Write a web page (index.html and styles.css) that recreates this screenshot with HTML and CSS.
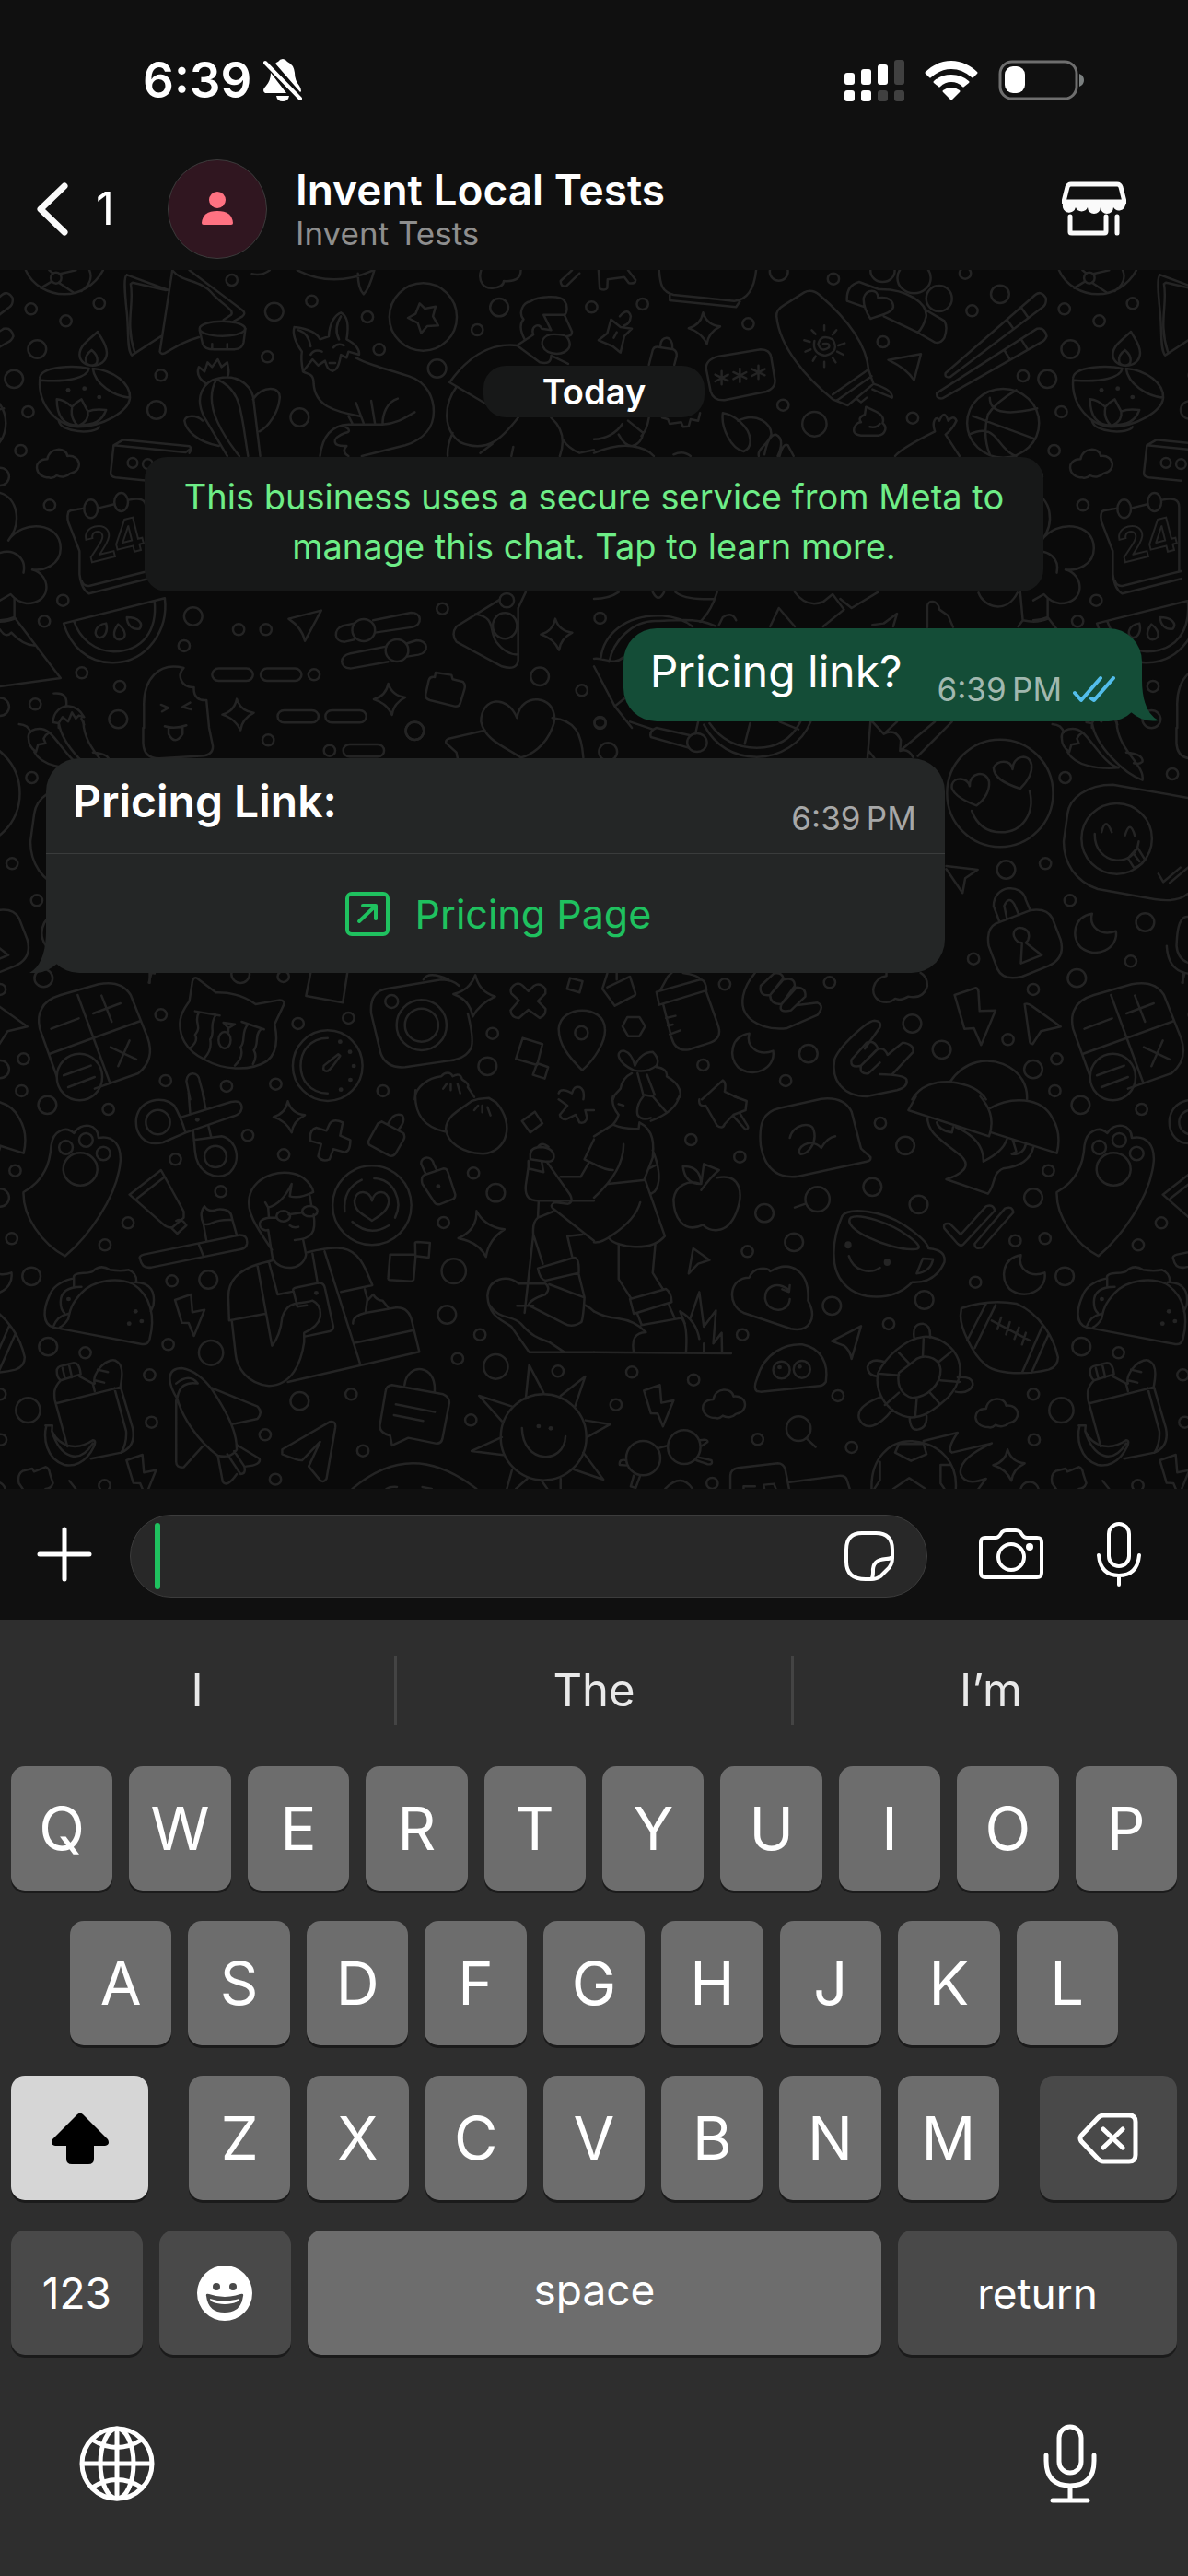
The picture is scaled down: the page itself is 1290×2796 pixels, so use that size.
FILE: index.html
```html
<!DOCTYPE html>
<html lang="en">
<head>
    <meta charset="utf-8">
    <meta name="viewport" content="width=device-width, initial-scale=1">
    <title>Invent Local Tests</title>
    <link rel="stylesheet" href="styles.css">
</head>
<body>
    <header class="top">
        <div class="status">
            <div class="statusLeft">
                <span class="clock">6:39</span>
                <svg class="bell" viewBox="0 0 42 46" aria-hidden="true">
                    <path fill="#fff" d="M13 5Q15 3 16 3Q18 0 21 0T26 3Q33 6 34 15Q34 23 39 29Q41 32 41 35L40 36ZM8 15L25 37H2Q0 36 0 34Q0 32 3 29Q8 23 8 15ZM14 40H28Q27 46 21 46T14 40Z"/>
                    <path stroke="#fff" stroke-width="4" stroke-linecap="round" d="M2 4L40 43"/>
                </svg>
            </div>
            <div class="statusRight">
                <svg class="signal" viewBox="0 0 65 45" aria-hidden="true">
                    <g fill="#fff">
                        <rect x="0" y="14" width="11" height="13" rx="3"/>
                        <rect x="18" y="10" width="11" height="17" rx="3"/>
                        <rect x="36" y="5" width="11" height="22" rx="3"/>
                        <rect x="0" y="33" width="11" height="12" rx="3"/>
                        <rect x="18" y="33" width="11" height="12" rx="3"/>
                    </g>
                    <g fill="#404040">
                        <rect x="54" y="0" width="11" height="27" rx="3"/>
                        <rect x="36" y="33" width="11" height="12" rx="3"/>
                        <rect x="54" y="33" width="11" height="12" rx="3"/>
                    </g>
                </svg>
                <svg class="wifi" viewBox="0 0 58 42" aria-hidden="true">
                    <path fill="#fff" d="M29 0C18 0 8 5 1 12Q0 13 1 14L5 18Q6 19 7 18Q17 9 29 9T51 18Q52 19 53 18L57 14Q58 13 57 12C50 5 40 0 29 0ZM29 15Q18 15 10 22Q9 23 10 24L15 28Q16 29 17 28Q22 23 29 23T41 28Q42 29 43 28L48 24Q49 23 48 22Q40 15 29 15ZM29 29Q24 29 20 32Q19 33 20 34L28 42Q29 43 30 42L38 34Q39 33 38 32Q34 29 29 29Z"/>
                </svg>
                <svg class="battery" viewBox="0 0 94 44" aria-hidden="true">
                    <rect x="2" y="2" width="83" height="40" rx="13" fill="none" stroke="#6e6e6e" stroke-width="3"/>
                    <rect x="7" y="7" width="22" height="29" rx="9" fill="#fff"/>
                    <path fill="#7b8080" d="M88 15Q93 17 93 22T88 29Z"/>
                </svg>
            </div>
        </div>
        <div class="nav">
            <button class="back" type="button" aria-label="Back, 1 unread">
                <svg width="34" height="58" viewBox="0 0 34 58" aria-hidden="true"><path fill="none" stroke="#fafafa" stroke-width="7" stroke-linecap="round" stroke-linejoin="round" d="M30 4L4 29L30 54"/></svg>
                <span>1</span>
            </button>
            <div class="avatar">
                <svg width="36" height="38" viewBox="0 0 36 38" aria-hidden="true"><circle cx="18" cy="9" r="9" fill="#ff7282"/><path fill="#ff7282" d="M1 34Q2 21 18 21T35 34Q35 36 33 36H3Q1 36 1 34Z"/></svg>
            </div>
            <div class="contact">
                <h1>Invent Local Tests</h1>
                <p>Invent Tests</p>
            </div>
            <button class="store" type="button" aria-label="Store">
                <svg width="70" height="60" viewBox="0 0 70 60" aria-hidden="true">
                    <g fill="none" stroke="#fafafa" stroke-width="5" stroke-linejoin="round" stroke-linecap="round">
                        <path d="M10 3H60Q63 3 64 6L68 22H2L6 6Q7 3 10 3Z"/>
                        <path d="M9 38V55Q9 56 11 56H46Q48 56 48 54V38M60 38V56"/>
                    </g>
                    <path fill="#fafafa" d="M1 21H69V25A7 7 0 0 1 56 28A7 7 0 0 1 42 28A7 7 0 0 1 28 28A7 7 0 0 1 15 28A7 7 0 0 1 1 25Z"/>
                </svg>
            </button>
        </div>
    </header>

    <main class="chat">
        <!-- doodle wallpaper, the tile repeats every 1122 units -->
        <svg class="wallpaper" viewBox="0 0 1290 1323" preserveAspectRatio="xMidYMin slice" aria-hidden="true">
            <defs>
                <ellipse id="s" rx="15" ry="18"/>
                <ellipse id="m" rx="24" ry="29"/>
                <ellipse id="l" rx="32" ry="40"/>
                <ellipse id="dot" class="solid" rx="6" ry="7"/>
                <path id="spark" d="M0-52Q10-12 45-7Q14 12 10 50Q-4 12-38-1Q-6-12 0-52Z"/>
                <path id="bolt" d="M0 18L42 0L46 58L78 50L50 135L36 93L18 92Z"/>
                <path id="moon" d="M0 0C-50 10-55 75-30 110C10 150 70 115 63 57C25 75-10 45 0 0Z"/>
                <path id="cloud" d="M-22 45C-62 45-67-15-27-15C-22-55 23-55 26-25C63-30 68 25 33 32C23 45 8 45-2 38Q-12 50-22 45Z"/>
                <path id="star" d="M0-22V22M-17-10L17 10M-17 12L17-10"/>
            </defs>
            <g id="tile">
                <g transform="translate(0 -3) scale(.4113 .3333)">
                    <path d="M68 10C85 60 130 88 170 88S250 60 272 10M134 35a14 18 0 1 0 28 0a14 18 0 1 0-28 0M140 20L130 10M158 22L200 10M137 46L108 68M155 50L193 82M236 10C245 35 235 60 215 78"/>
                    <path d="M335 25L445 75M335 25C325 30 330 90 335 150S335 270 348 287L425 225M345 55L350 50L438 75M345 55C355 120 330 180 355 275M455 10L422 275Q425 285 435 280C470 255 490 240 525 228M455 10C480 50 530 40 560 85C590 125 620 140 610 155L590 172M500 10L640 140Q650 150 640 160L615 178"/>
                    <ellipse cx="587" cy="200" rx="60" ry="24"/>
                    <path d="M527 205L535 250Q540 268 565 268H615Q640 268 643 245L648 200M560 250V265M600 250V265"/>
                    <path d="M258 210C225 245 210 260 210 285C210 330 280 335 282 280C282 250 268 235 258 210ZM242 270C220 290 222 320 242 320S262 290 242 270M105 360C110 320 200 320 235 330C230 360 180 375 108 368M245 330C300 335 345 380 343 425C300 420 250 380 245 330M105 365C100 450 150 515 205 520C270 520 340 470 343 425M150 430C150 480 165 515 205 515C250 515 270 500 280 465Q250 460 232 470L215 430Q200 440 190 455Q170 432 150 430M190 460C185 490 200 510 205 515M232 470C235 490 225 505 210 515M155 500C160 540 250 545 262 520"/>
                    <use href="#dot" x="180" y="400"/><use href="#dot" x="223" y="395"/><use href="#dot" x="262" y="423"/>
                    <use href="#cloud" x="152" y="640"/>
                    <path d="M300 580L325 562L500 583Q508 590 500 605M300 580L490 603L505 590M300 580L292 670Q292 683 305 685L390 695"/>
                    <ellipse cx="350" cy="637" rx="13" ry="16"/><ellipse cx="390" cy="641" rx="13" ry="16"/>
                    <path d="M545 380C520 360 520 340 525 325L540 340L548 310L560 325L575 300L585 325L600 310C605 340 605 345 600 358M600 615L540 490C510 420 540 370 575 362C640 345 670 400 670 440L687 615M632 615C570 520 540 430 572 365C640 400 635 470 655 615M668 430C690 385 745 385 738 430C735 470 710 520 685 535M578 582C520 570 490 530 487 500C490 480 520 480 535 500"/>
                    <path d="M777 195C820 200 840 220 845 235L868 225C870 180 885 155 900 148C920 160 920 200 915 235C940 250 950 270 948 285L920 275L915 295L900 285C895 320 890 335 878 338C865 335 862 320 858 305L840 320L825 300L800 340C795 310 795 290 797 275C780 245 772 215 777 195M788 205Q815 215 820 258M900 160Q880 200 895 235M820 285Q830 265 850 275M880 262Q890 245 908 255M870 312H885M800 340C815 350 828 345 828 380C832 450 880 470 950 485M940 295C960 310 1000 325 1080 355C1130 375 1145 430 1145 470C1145 520 1120 560 1070 580L955 615M845 615C850 560 870 515 920 512H1010C1050 508 1070 490 1095 472M1010 512C1010 480 1020 440 1050 428M980 435L990 510M940 442L960 508M920 485L930 508M905 515Q935 535 910 540C870 560 880 585 915 582Q900 600 920 615"/>
                    <ellipse cx="1117" cy="162" rx="89" ry="110"/>
                    <path d="M1108 118L1122 135L1150 128L1143 160L1157 190L1128 192L1112 215L1103 182L1077 165L1097 152Z"/>
                    <path d="M1385 235C1370 200 1375 180 1382 170C1368 150 1380 115 1400 112C1420 95 1480 90 1490 110C1500 125 1497 150 1490 155L1510 210Q1510 225 1495 225C1515 255 1500 280 1470 282C1430 280 1420 240 1445 222C1460 215 1480 220 1490 222M1490 155H1435L1455 205L1430 200C1425 180 1400 190 1408 220L1365 255L1425 310Q1455 320 1455 288L1500 315M1365 255C1290 245 1230 300 1187 375L1290 450M1205 390C1170 450 1170 530 1215 570C1290 610 1330 550 1368 490M1195 540Q1180 580 1182 615M1455 490Q1500 540 1478 615M1268 605L1300 575M1355 585L1350 615M1485 560Q1500 590 1530 605L1568 595"/>
                    <path d="M785 10Q880 70 985 10M945 20Q945 70 960 88Q975 70 988 10M665 22Q690 30 712 10M1270 10C1260 50 1280 70 1300 68Q1330 65 1330 45Q1375 50 1375 10M1510 10L1480 45Q1480 65 1495 62L1530 20"/>
                    <path d="M0 735C45 750 60 830 22 890C60 820 160 830 160 915C160 970 115 990 85 985C135 1000 140 1095 70 1095Q45 1090 28 1065L0 1085M0 930C40 915 70 950 62 995M38 1080V1140L160 1338L0 1365M38 1140Q20 1150 0 1150M0 1180Q15 1210 30 1190Q60 1230 90 1232"/>
                    <path d="M180 800C180 790 200 790 222 785M258 785L302 772M340 758Q385 745 385 780V990M180 800Q175 820 185 845L210 925V1000Q215 1050 235 1063L390 1015M215 1020Q220 1040 235 1038L390 990"/>
                    <ellipse cx="240" cy="787" rx="18" ry="30"/><ellipse cx="320" cy="765" rx="18" ry="30"/>
                    <path d="M168 1160L435 1078C445 1180 390 1285 300 1288C230 1290 185 1230 168 1160ZM195 1152C210 1210 250 1250 300 1252C380 1250 415 1180 408 1088M280 1160C250 1165 245 1200 262 1207C280 1205 285 1180 280 1160ZM312 1163C295 1190 300 1210 315 1213C335 1210 335 1185 312 1163ZM335 1140C335 1165 350 1182 368 1178C380 1160 365 1140 335 1140Z"/>
                    <path d="M762 1145L848 1118L805 1217Q798 1175 762 1145Z"/>
                    <path d="M935 1160L905 1168C880 1178 880 1220 910 1220L935 1213M985 1150L1085 1125C1115 1125 1115 1165 1090 1172L990 1190M1020 1235L925 1258C895 1265 895 1305 925 1307L1025 1285M1075 1225L1100 1215C1130 1215 1135 1255 1105 1262L1075 1268"/>
                    <ellipse cx="960" cy="1182" rx="30" ry="36"/><ellipse cx="1048" cy="1248" rx="30" ry="36"/>
                    <path d="M1320 1082L1205 1170Q1190 1195 1205 1220L1325 1300Q1365 1315 1368 1280V1110L1388 1058M1255 1130C1310 1140 1290 1180 1310 1220Q1335 1262 1368 1262"/>
                    <ellipse cx="1338" cy="1085" rx="19" ry="23"/><ellipse cx="1333" cy="1168" rx="32" ry="42"/>
                    <use href="#spark" x="1466" y="1197"/><use href="#spark" x="625" y="1458"/><use href="#spark" x="1025" y="1408"/>
                    <rect x="560" y="1307" width="108" height="40" rx="17" ry="20"/><rect x="688" y="1307" width="108" height="40" rx="17" ry="20"/><rect x="733" y="1443" width="108" height="40" rx="17" ry="20"/><rect x="859" y="1443" width="108" height="40" rx="17" ry="20"/>
                    <use href="#s" x="829" y="1327"/>
                    <path d="M1150 1320L1192 1328L1195 1342L1222 1350Q1230 1360 1226 1375L1215 1420Q1212 1432 1200 1430L1135 1410Q1122 1405 1124 1390L1132 1345Q1135 1332 1148 1335Z"/>
                    <path d="M1365 1468C1370 1420 1400 1405 1420 1408C1465 1415 1470 1470 1458 1500C1440 1560 1400 1590 1375 1597C1330 1560 1280 1540 1270 1480C1270 1400 1340 1390 1365 1468ZM1458 1468C1520 1475 1535 1520 1540 1597"/>
                    <path d="M380 1500V1430C378 1340 420 1285 485 1305C465 1330 480 1370 512 1368C510 1400 525 1412 545 1410L552 1500L562 1560Q562 1590 530 1592L420 1600Q380 1600 378 1550V1500M425 1425L445 1435L428 1447M502 1418L482 1432L505 1440M435 1495Q462 1505 492 1492M445 1500V1520Q462 1560 482 1520V1500"/>
                    <path d="M142 1388C170 1385 178 1400 175 1430M140 1482C140 1450 160 1428 182 1430C205 1432 215 1450 222 1465L208 1460L200 1470L190 1450L180 1480L165 1465L155 1485ZM155 1485V1500M215 1470L222 1490"/>
                    <use href="#s" x="82" y="136"/><use href="#s" x="174" y="175"/><use href="#s" x="262" y="118"/><use href="#s" x="612" y="42"/><use href="#s" x="823" y="110"/><use href="#s" x="706" y="292"/><use href="#s" x="970" y="162"/><use href="#s" x="1001" y="268"/><use href="#s" x="425" y="352"/><use href="#s" x="74" y="471"/><use href="#s" x="55" y="597"/><use href="#s" x="131" y="775"/>
                    <use href="#s" x="166" y="1085"/><use href="#s" x="117" y="1153"/><use href="#s" x="630" y="1180"/><use href="#s" x="702" y="1180"/><use href="#s" x="486" y="1233"/><use href="#s" x="216" y="1321"/><use href="#s" x="316" y="1365"/><use href="#s" x="93" y="1423"/><use href="#s" x="1168" y="1112"/><use href="#s" x="1536" y="1378"/><use href="#s" x="1260" y="204"/><use href="#s" x="1562" y="130"/>
                    <use href="#m" x="98" y="267"/><use href="#m" x="37" y="364"/><use href="#m" x="413" y="465"/><use href="#m" x="791" y="489"/><use href="#m" x="724" y="145"/><use href="#m" x="1154" y="330"/><use href="#m" x="1318" y="131"/><use href="#m" x="510" y="1137"/><use href="#m" x="312" y="1472"/><use href="#m" x="1425" y="1333"/><use href="#m" x="0" y="682"/><use href="#m" x="1095" y="1510"/><use href="#m" x="0" y="1432"/>
                </g>
                <text x="97" y="318" transform="rotate(-14 97 318)">24</text>
                <g transform="translate(645 -3) scale(.4113 .3333)">
                    <path d="M172 10C175 60 180 80 210 90L370 110Q420 105 428 10M200 90V108L375 130L385 112M12 10L15 70Q30 78 35 68L36 40L80 32L92 52Q110 55 110 42L90 10"/>
                    <use href="#spark" x="288" y="200"/>
                    <path d="M145 318L155 270Q158 258 170 260L210 268Q220 275 218 290L212 318M175 258C175 220 210 220 207 265M45 170L70 195L100 200L80 225L70 278L50 258L12 238L35 215ZM68 160Q90 130 97 160Q95 185 80 190M60 212L52 230"/>
                    <path d="M330 290L440 268Q465 268 468 295L478 370Q478 395 455 405L345 433Q315 435 308 405L296 330Q295 300 330 290Z"/>
                    <use href="#star" x="337" y="360"/><use href="#star" x="385" y="352"/><use href="#star" x="434" y="342"/>
                    <path d="M482 160Q480 140 500 125L555 82Q575 70 595 90C680 180 720 260 725 335L738 380L670 450L630 430C560 360 490 260 482 160ZM630 415L722 335M640 435L733 355M738 380Q790 400 787 425L735 398M695 430L705 440L720 425M605 250Q625 245 620 262Q600 280 592 250Q600 215 630 235Q650 275 610 288Q575 280 582 240M608 190V205M608 308V325M555 238L570 243M645 255L662 248M575 205L585 218M640 205L630 220M558 275L572 268M642 275L658 285M578 305L585 290M638 310L630 295"/>
                    <path d="M712 100C720 70 750 70 750 100C780 95 790 110 790 130C785 150 760 155 730 168Q710 130 712 100ZM668 110Q665 60 700 48L752 72M668 110L715 130M752 72C830 70 880 120 877 160Q870 195 855 213L765 160M877 140L925 175Q935 195 925 230Q915 250 900 245L855 213"/>
                    <ellipse cx="845" cy="35" rx="44" ry="50"/><ellipse cx="911" cy="102" rx="34" ry="42"/><ellipse cx="762" cy="12" rx="32" ry="36"/>
                    <path d="M928 345L1165 90Q1180 75 1193 100Q1195 120 1185 130L940 358Q925 360 928 345ZM1090 170L1108 202M1127 130L1145 162M905 410L1170 200Q1190 195 1195 225Q1190 240 1180 245L920 427Q903 430 905 410ZM1083 270L1098 300M1128 235L1145 268M777 302L863 283L845 368Q825 330 777 302Z"/>
                    <path d="M718 455C745 470 770 480 762 508C775 520 770 545 750 548H705Q680 545 688 520Q695 505 705 505Q695 490 715 480ZM728 520Q745 525 755 510M340 475C370 480 410 520 412 560Q415 590 395 600C360 590 335 520 340 475ZM380 500C430 470 470 510 468 545C460 580 430 590 435 615M450 610Q460 545 480 545Q505 560 485 615M490 615Q500 570 512 580L527 615M795 615Q810 590 900 535C890 500 905 480 912 500Q925 460 935 500Q950 480 957 500Q945 530 928 545L965 615"/>
                    <ellipse cx="1080" cy="508" rx="95" ry="112"/>
                    <path d="M1000 485L1165 560M1115 400Q1060 440 1040 480Q1025 550 1045 610M1045 425C1045 480 1100 480 1170 460M990 545C1050 510 1060 560 1085 590Q1100 610 1115 615M180 490L195 495L200 510L230 505L235 520L250 518L255 495L275 500L280 475M0 560C30 560 60 540 75 510M90 500L130 540Q125 575 100 583Q80 580 65 545M145 490Q140 530 125 550M0 605Q60 575 100 583Q140 590 158 615M210 610Q235 595 255 615"/>
                    <path d="M0 1080Q40 1080 65 1058M215 1058Q240 1085 320 1080M325 1058Q310 1120 280 1155M155 1058Q170 1095 185 1058M530 1058Q560 1110 605 1090L630 1065L660 1115L605 1170M650 1080L680 1110L750 1058M465 1170L488 1110L530 1170M735 1165L765 1160L800 1128L790 1170M880 1172V1105C880 1080 910 1085 912 1115L935 1135L948 1172M18 1272C25 1200 80 1130 180 1135Q230 1140 260 1170M40 1285C50 1220 100 1150 165 1152C220 1150 270 1140 320 1168M330 1165L340 1140Q365 1120 375 1150M0 1275C30 1270 50 1300 78 1270M0 1300L55 1430L100 1500M55 1430L80 1405M1015 1060C1030 1110 1090 1130 1118 1060M1125 1055L1132 1150L1120 1170M1132 1150Q1170 1160 1198 1145"/>
                    <use href="#s" x="128" y="120"/><use href="#s" x="407" y="184"/><use href="#s" x="632" y="38"/><use href="#s" x="763" y="243"/><use href="#s" x="998" y="142"/><use href="#s" x="980" y="20"/><use href="#s" x="1133" y="354"/><use href="#s" x="499" y="449"/><use href="#s" x="841" y="491"/><use href="#s" x="16" y="1143"/><use href="#s" x="16" y="1482"/>
                    <use href="#m" x="1072" y="88"/><use href="#m" x="488" y="15"/><use href="#l" x="582" y="511"/>
                </g>
                <g transform="translate(0 487) scale(.4113 .3333)">
                    <path d="M110 945Q120 915 160 900L260 865Q320 850 345 900L390 1040Q410 1110 365 1155L250 1205M150 1165L105 1010Q98 970 110 945M205 900L290 1185M130 1092L370 985M135 1010L208 976M246 960L318 927M268 902L295 987M292 1070L360 1110M342 1048L312 1132M168 1162L240 1130M180 1200L250 1167"/>
                    <ellipse cx="210" cy="1167" rx="60" ry="76"/>
                    <path d="M500 920L508 855Q512 840 520 845L570 892Q630 890 675 930L735 917Q755 915 748 935L725 995Q740 1080 705 1115C660 1150 590 1145 540 1110C490 1080 470 1030 476 980C480 950 495 930 500 920ZM515 953L580 967M638 987L697 1012M525 957C510 990 535 1000 515 1030Q525 1050 500 1075M570 965C550 1000 570 1020 555 1045Q560 1080 540 1105M655 995C635 1020 650 1050 635 1070Q645 1100 620 1130M690 1010C670 1030 685 1060 670 1080Q680 1100 668 1125M590 990L620 995L603 1008ZM603 1008V1020"/>
                    <ellipse cx="593" cy="1047" rx="16" ry="27"/>
                    <ellipse cx="865" cy="1130" rx="92" ry="115"/>
                    <path d="M865 1040C770 1040 770 1220 865 1220M893 1093L855 1130Q850 1150 865 1148Q875 1140 898 1098Z"/>
                    <use href="#dot" x="898" y="1052"/><use href="#dot" x="924" y="1085"/><use href="#dot" x="934" y="1131"/><use href="#dot" x="925" y="1176"/><use href="#dot" x="900" y="1208"/>
                    <path d="M1235 960Q1255 1060 1240 1080Q1225 1110 1180 1115L1070 1135Q1020 1140 1005 1090L980 960Q975 890 1020 880L1165 850Q1195 850 1212 870M1118 850Q1130 820 1185 850"/>
                    <ellipse cx="1113" cy="998" rx="66" ry="82"/><ellipse cx="1113" cy="998" rx="44" ry="54"/><ellipse cx="1034" cy="921" rx="17" ry="21"/>
                    <path d="M1255 835Q1265 890 1307 905Q1265 930 1248 970Q1240 915 1197 897Q1240 885 1255 835ZM1355 870Q1368 855 1380 870L1395 888L1410 870Q1425 858 1440 880V895L1420 920L1440 945Q1442 965 1425 975L1395 948L1370 975Q1350 975 1348 950L1370 918L1350 895Q1345 880 1355 870ZM1380 1040L1432 1060L1418 1128L1362 1108ZM1418 1122L1447 1135L1438 1172L1407 1160ZM1505 845L1538 855L1530 892L1497 880ZM1537 1145C1500 1100 1475 1060 1475 1010C1480 930 1595 930 1597 1010C1600 1050 1570 1110 1537 1145Z"/>
                    <ellipse cx="1535" cy="1023" rx="17" ry="22"/>
                    <path d="M820 828L808 903L905 925L917 828M400 828L393 860M502 1240L492 1180C495 1145 525 1150 527 1180L540 1240M1170 1205L1180 1188M1190 1210V1190M1215 1220L1208 1190M1095 1240C1095 1200 1130 1170 1165 1165C1175 1150 1190 1150 1195 1165Q1215 1150 1220 1175Q1240 1190 1235 1200L1252 1232M1475 1220Q1480 1200 1510 1220Q1515 1195 1530 1200Q1545 1210 1540 1240M1280 38L1185 65Q1175 70 1178 80L1205 110L1208 128"/>
                    <rect x="906" y="84" width="108" height="40" rx="17" ry="20"/>
                    <use href="#s" x="870" y="104"/><use href="#s" x="708" y="70"/><use href="#s" x="84" y="192"/><use href="#s" x="32" y="472"/><use href="#s" x="97" y="592"/><use href="#s" x="748" y="840"/><use href="#s" x="425" y="964"/><use href="#s" x="787" y="993"/><use href="#s" x="920" y="975"/><use href="#s" x="1300" y="1025"/><use href="#s" x="62" y="1108"/><use href="#s" x="57" y="1212"/><use href="#s" x="437" y="1179"/><use href="#s" x="598" y="1197"/><use href="#s" x="728" y="1190"/><use href="#s" x="1011" y="1212"/><use href="#s" x="0" y="882"/>
                    <use href="#m" x="1095" y="40"/><use href="#m" x="115" y="845"/><use href="#m" x="635" y="832"/><use href="#m" x="1287" y="1132"/><use href="#m" x="0" y="1142"/>
                </g>
                <g transform="translate(645 487) scale(.4113 .3333)">
                    <path d="M95 10L155 35M165 30Q145 40 150 60L250 95M165 30L255 55M275 10L268 48M290 20C320 90 370 125 430 125S550 80 572 10M305 15Q350 95 430 95T545 10M412 15L398 82M490 10L540 35M730 10L722 128M735 10L765 50Q795 30 810 70L808 105Q830 95 842 125M765 50L800 10M808 105L900 10M855 122L945 10M725 105L740 128"/>
                    <ellipse cx="272" cy="78" rx="26" ry="30"/>
                    <ellipse cx="1072" cy="243" rx="140" ry="175"/>
                    <path d="M1010 283C970 265 940 240 945 215C950 190 985 190 992 220C990 175 1035 165 1043 205C1045 230 1035 260 1010 283ZM1125 228C1080 210 1055 190 1055 160C1065 135 1100 130 1105 165C1105 120 1150 110 1155 150C1158 180 1140 210 1125 228ZM997 300C1015 360 1050 370 1075 370C1130 370 1165 310 1150 235"/>
                    <path d="M1210 18Q1235 20 1240 45M1235 65C1230 30 1270 25 1290 45L1280 55L1275 65L1280 80L1260 85L1255 108C1240 95 1235 80 1235 65M1290 45C1320 80 1350 150 1385 160C1330 165 1270 155 1250 108M1315 15C1325 90 1400 180 1448 200C1455 150 1380 100 1380 10M1405 110Q1450 115 1448 140Q1440 150 1425 145"/>
                    <path d="M1568 258L1370 215C1300 215 1255 260 1250 310L1240 400C1240 470 1270 530 1330 555L1480 588Q1540 600 1568 570M1340 370Q1350 315 1367 370M1402 380Q1415 325 1428 382M1322 375C1320 480 1430 490 1438 400M1410 455L1435 420L1455 460Q1440 485 1425 485ZM1425 440L1440 465M1490 505L1503 532L1548 485M1520 535L1568 485"/>
                    <ellipse cx="1380" cy="391" rx="93" ry="115"/>
                    <path d="M930 480L1013 492L980 520L973 568L930 490M1070 660L1055 610C1055 540 1130 535 1140 590L1152 625M1090 650L1083 610Q1095 575 1110 605L1122 640M1060 668L1150 625Q1195 615 1210 650L1232 720Q1245 780 1200 805L1130 840Q1080 855 1065 815L1042 740Q1035 685 1060 668ZM1120 728C1095 700 1115 675 1130 682C1155 690 1150 720 1140 730L1182 770L1127 797L1130 730Z"/>
                    <use href="#moon" x="1315" y="635"/><use href="#moon" x="410" y="1025"/>
                    <path d="M1568 645Q1540 640 1538 740Q1540 780 1568 795M1512 740Q1515 820 1568 830M1555 825V860M772 828V838C735 845 725 900 755 920Q780 930 795 912Q810 920 830 905Q870 915 880 870Q880 840 862 828M952 900L1008 877Q1015 880 1015 890L1018 952L1060 950L1022 1063L1003 1008L978 1010ZM1137 930Q1145 925 1155 935L1232 1003L1180 1018L1158 1060Q1150 1060 1150 1045Z"/>
                    <path d="M165 890L280 850Q295 850 297 885L172 932ZM175 885L195 840L205 828M235 828Q275 835 282 850M183 932L205 1040Q215 1085 250 1078L300 1058Q340 1045 328 1000L295 885M190 975L215 968M195 1000L208 996M200 1028L228 1015M35 875L95 840L108 890Q112 900 105 903L55 935L22 880L35 830M60 828V850M88 972H120L135 1002L120 1034H90L75 1002Z"/>
                    <path d="M425 828C390 880 385 930 400 960C420 1000 470 1015 510 1008L590 965Q610 935 590 925L537 933M440 870L475 830Q495 825 500 845L465 900Q435 905 440 870M465 900L500 850Q530 840 530 870L495 930Q465 930 465 900M495 930L535 875Q560 875 558 905L520 950Q485 960 495 930M635 1110C645 1070 720 985 740 983Q760 985 755 1005L715 1075M635 1110C625 1180 660 1230 720 1230L800 1210Q830 1200 825 1175Q820 1160 755 1158M680 1110L720 1055Q740 1045 750 1075L705 1130Q675 1140 680 1110M705 1130L745 1080Q765 1065 775 1095L815 1055Q845 1060 843 1085L788 1158M705 1130Q700 1160 725 1155L755 1120"/>
                    <path d="M105 1145C60 1120 55 1080 80 1082Q100 1090 108 1130Q125 1085 155 1085Q175 1110 165 1130Q140 1155 105 1145ZM100 1155Q75 1170 70 1205L55 1225L50 1240M115 1155L130 1225L155 1230M140 1160L160 1225M165 1135Q195 1140 192 1165C230 1190 235 1230 220 1240M285 1240L340 1178Q350 1185 345 1215L380 1235M940 1183C980 1110 1040 1105 1080 1125C1130 1150 1145 1200 1143 1240M840 1240C860 1195 900 1180 940 1183C990 1190 1020 1210 1035 1240"/>
                    <use href="#s" x="16" y="15"/><use href="#s" x="345" y="865"/><use href="#s" x="622" y="859"/><use href="#s" x="288" y="1128"/><use href="#s" x="506" y="1179"/><use href="#s" x="1002" y="782"/><use href="#s" x="1417" y="790"/><use href="#s" x="1093" y="1045"/><use href="#s" x="1527" y="180"/>
                    <use href="#m" x="37" y="108"/><use href="#m" x="1088" y="492"/><use href="#m" x="1455" y="663"/><use href="#m" x="566" y="1091"/><use href="#m" x="840" y="993"/><use href="#m" x="918" y="1078"/>
                </g>
                <g transform="translate(0 897) scale(.4113 .3333)">
                    <path d="M172 520C110 480 60 390 62 312C110 280 132 230 135 160C140 110 175 95 195 120C215 80 260 90 260 135C300 125 320 160 318 210C310 330 230 460 172 520Z"/>
                    <ellipse cx="212" cy="237" rx="45" ry="53"/><ellipse cx="174" cy="166" rx="18" ry="22"/><ellipse cx="227" cy="142" rx="18" ry="22"/><ellipse cx="273" cy="186" rx="18" ry="22"/>
                    <path d="M490 118L430 150C380 165 355 120 360 70C370 10 430-5 460 30Q475 60 490 118ZM478 68L610 18Q640 10 638 40Q635 60 615 65L490 118M498-10L502 55M535-10L543 40M510 112L515 180C520 250 570 275 605 250C640 210 625 140 585 130L512 142M550 95L557 130"/>
                    <ellipse cx="417" cy="84" rx="32" ry="40"/><ellipse cx="569" cy="196" rx="29" ry="35"/>
                    <use href="#spark" x="760" y="68"/>
                    <path d="M870 90Q880 70 905 85L898 128L925 142Q925 180 910 182L880 172L870 205Q850 215 840 195L848 155L820 145Q815 110 835 102L862 112ZM1008 82L1065 120Q1070 130 1066 140L1045 185Q1038 197 1028 193L975 158Q970 150 975 140L998 88ZM1025 88Q1040 50 1062 62Q1072 80 1052 108M1122 255L1170 235Q1180 235 1182 245L1202 320Q1202 332 1195 335L1160 352Q1150 353 1147 345L1115 285Q1110 262 1122 255ZM1123 250L1112 220C1110 195 1140 190 1145 220L1152 238"/>
                    <use href="#dot" x="1157" y="293"/>
                    <ellipse cx="982" cy="355" rx="104" ry="129"/>
                    <path d="M982 340C990 300 1025 305 1027 340C1025 375 1000 390 982 405C960 385 935 375 936 340C940 300 978 305 982 340ZM910 375Q905 300 955 272M988 267C1040 270 1065 340 1043 395M930 408Q975 460 1027 420"/>
                    <path d="M342 320L425 240L485 375V395L455 427Q440 428 430 415ZM362 332L432 265M465 405Q480 395 492 420L468 447L452 428M370 530Q365 520 380 515L630 452Q655 450 652 480Q650 495 635 498L400 557Q375 562 370 530ZM525 483L537 520M545 470L537 415Q525 380 540 358Q550 380 575 368Q610 365 612 395L625 452M537 415Q550 420 560 412Q580 400 612 402"/>
                    <path d="M718 500C680 430 650 380 658 330C670 250 760 230 800 265Q825 290 827 312Q790 335 765 325L770 285Q745 350 708 362L700 345M708 362L710 395H730M710 395Q680 400 687 425Q695 440 708 435L720 530C740 570 800 570 808 515L800 465M818 325L822 355M828 385C835 440 825 465 778 468M762 385L800 378M765 420Q775 430 788 425"/>
                    <ellipse cx="748" cy="390" rx="18" ry="17"/><ellipse cx="818" cy="374" rx="20" ry="17"/>
                    <path d="M812 508Q870 490 905 495C950 505 965 560 983 615L900 637M718 535C640 555 600 590 603 660L605 730L700 708M680 553L718 812Q740 780 745 720C760 660 790 680 825 665Q850 680 845 720Q840 750 803 770V800C795 870 770 940 710 943C650 935 625 880 622 840L612 730M710 540L733 645L775 635M825 512L838 605M857 505L950 868M775 635Q770 625 785 622L840 608Q855 605 858 625L880 750Q880 762 870 765L805 782M775 635L785 685L810 680M760 930L1107 832L1088 735Q1080 685 1045 688L965 705Q930 715 932 740M940 802L1090 762M963 628L970 660L965 705M970 665L985 645Q995 665 1010 665L1025 688"/>
                    <use href="#dot" x="835" y="640"/><use href="#dot" x="521" y="76"/>
                    <path d="M1030 515H1095Q1098 517 1097 525L1092 597Q1090 602 1085 602L1028 598Q1024 597 1025 590ZM1096 478Q1096 474 1102 474L1135 477L1132 525L1097 520ZM1258 373Q1280 425 1332 433Q1290 465 1283 523Q1265 475 1210 462Q1260 435 1258 373ZM1097-20C1092 60 1120 100 1175 115M1245 15L1265 8L1290 5L1310 20C1360 90 1340 180 1275 187C1220 185 1180 150 1177 105C1180 60 1215 45 1245 15M1252 45L1262 30M1273 52V30M1295 62L1287 35M1378 80L1412 50L1432 88L1400 118ZM1475 10L1498 30L1478 60Q1480 75 1495 75L1520 60L1530 85Q1545 90 1550 70L1545 45H1568"/>
                    <path d="M140 752C110 740 115 690 130 650C145 600 190 595 195 592C190 570 230 580 245 570Q265 545 290 565Q320 570 340 565Q360 575 360 600M195 592V620M140 752L375 807Q390 810 395 790C410 720 400 650 350 610C310 590 250 595 215 640C185 680 185 700 180 725Q170 745 158 752M140 752Q150 715 180 708M160 670Q160 620 215 620M160 670Q160 695 170 705M355 605C400 605 410 640 405 680L398 700"/>
                    <use href="#dot" x="358" y="700"/><use href="#dot" x="341" y="740"/><use href="#dot" x="374" y="732"/><use href="#dot" x="181" y="660"/>
                    <use href="#bolt" x="462" y="645"/><use href="#bolt" x="334" y="1167"/>
                    <path d="M150 895Q150 880 165 877L195 868Q210 868 213 905L160 925Q150 915 150 895ZM165 885L172 920M183 878L190 915M160 925C140 950 143 970 145 990L178 1140M210 912L245 935L250 960M148 1000L318 947M250 935C240 900 290 840 310 865C330 880 320 930 318 945L350 1080Q360 1140 320 1160L240 1180M302 950L333 1090Q335 1130 320 1160M258 890L285 898M250 925L275 932M120 1072H138L137 1090C160 1150 210 1150 245 1120Q255 1120 248 1140C225 1200 190 1205 170 1200C120 1180 115 1110 122 1075M137 1090C160 1180 210 1200 245 1130"/>
                    <path d="M468 985C440 930 440 885 480 885C510 890 540 920 560 955C610 1050 625 1100 625 1150Q610 1180 575 1170C520 1120 480 1040 468 985ZM468 982Q475 925 522 935Q500 900 465 935M560 950L680 1010Q695 1030 680 1050L615 1067M465 990V1190Q465 1210 485 1208L535 1140M575 1170L588 1255Q600 1275 625 1230M625 1135L685 1180Q690 1200 650 1205M600 1165L635 1230Q650 1230 645 1205L618 1155M745 1150L870 1060Q888 1055 885 1080L862 1245Q855 1260 845 1250L815 1205L845 1125L798 1185Q790 1188 745 1165Z"/>
                    <path d="M1035 940L1170 970Q1188 980 1186 1000L1168 1115Q1165 1132 1150 1130L1078 1112L1035 1137L1030 1105Q1000 1095 1003 1070L1018 960Q1020 942 1035 940ZM1068 940C1075 865 1155 870 1147 965M1045 1003L1148 1028M1040 1038L1117 1057"/>
                    <ellipse cx="1435" cy="1110" rx="113" ry="140"/>
                    <path d="M1388 985L1397 875L1435 965M1480 975L1545 912L1518 1010M1352 1010L1265 975L1325 1058M1325 1110L1245 1155L1328 1168M1352 1215L1338 1278M1392 1245L1362 1278M1430 1252L1445 1278M1480 1245V1278M1515 1215L1593 1248L1540 1160M1546 1055L1611 1068L1550 1110M1378 1080C1380 1200 1490 1200 1493 1107M930 1278Q1010 1195 1090 1195T1258 1278M1020 1278Q1030 1270 1048 1272M1115 1272L1140 1278M60 1220L85 1212L90 1222L120 1207Q130 1210 132 1230L140 1260Q135 1278 120 1278M60 1220Q45 1230 50 1260L60 1278M183 1252L200 1278"/>
                    <use href="#dot" x="1422" y="1074"/><use href="#dot" x="1454" y="1081"/>
                    <path d="M1400 190Q1400 165 1430 165Q1465 170 1462 200Q1460 215 1440 212L1400 205ZM1420 165Q1430 145 1448 165M1395 210V235L1435 247L1430 212M1395 230L1388 290C1385 330 1400 340 1420 340H1568M1445 215L1505 320Q1515 345 1500 350L1465 345Q1450 355 1460 365L1568 470M1480 262H1533L1555 215M1422 340L1420 395L1460 375M1420 395Q1405 410 1408 450L1385 705M1408 450L1433 545M1420 560L1515 525Q1530 525 1528 575L1440 600Q1425 595 1420 560ZM1537 450L1498 455L1510 520M1527 575L1543 655L1450 612M1543 655Q1540 720 1535 735Q1510 755 1490 740L1395 680Q1400 660 1440 645Q1455 625 1440 610H1370C1340 580 1290 590 1287 650C1290 720 1330 730 1350 750L1397 833H1568M1293 680C1320 730 1350 710 1375 740C1410 790 1430 790 1450 800L1490 833M1365 682H1408M1545 680Q1560 690 1568 700M1568 140L1543 205L1568 220"/>
                    <use href="#s" x="286" y="42"/><use href="#s" x="654" y="127"/><use href="#s" x="463" y="205"/><use href="#s" x="749" y="190"/><use href="#s" x="583" y="310"/><use href="#s" x="40" y="242"/><use href="#s" x="31" y="463"/><use href="#s" x="338" y="412"/><use href="#s" x="277" y="484"/><use href="#s" x="454" y="601"/><use href="#s" x="444" y="808"/><use href="#s" x="225" y="835"/><use href="#s" x="395" y="907"/><use href="#s" x="400" y="1061"/><use href="#s" x="700" y="1102"/><use href="#s" x="927" y="970"/><use href="#s" x="1243" y="1054"/><use href="#s" x="958" y="1154"/><use href="#s" x="727" y="1247"/><use href="#s" x="1208" y="854"/><use href="#s" x="1267" y="776"/><use href="#s" x="1171" y="411"/><use href="#s" x="1250" y="250"/><use href="#s" x="1473" y="895"/><use href="#s" x="276" y="1267"/>
                    <use href="#m" x="125" y="28"/><use href="#m" x="0" y="330"/><use href="#m" x="550" y="597"/><use href="#m" x="83" y="586"/><use href="#m" x="127" y="815"/><use href="#m" x="791" y="992"/><use href="#m" x="1309" y="314"/><use href="#m" x="1180" y="711"/>
                    <use href="#l" x="557" y="835"/><use href="#l" x="1198" y="569"/><use href="#l" x="1309" y="880"/><use href="#l" x="74" y="1022"/>
                </g>
                <g transform="translate(645 897) scale(.4113 .3333)">
                    <path d="M0 700Q30 720 60 722Q110 730 137 768Q95 770 105 833M0 833L362 837M125 745L230 722Q248 740 243 833M95 660L190 627Q205 640 205 670L105 708ZM115 710L125 742M198 680L213 722M65 485V595L98 658M162 480L155 575L182 628M42 465C60 490 150 510 187 455L135 272L38 285M0 475Q20 478 50 450Q110 400 122 345M0 130L50 92Q60 80 65 60Q45 30 50 0M50 92Q80 108 118 105L120 85C160 110 158 160 155 200L133 270M78 155Q80 240 0 330M0 220Q30 240 50 240M155 175Q185 270 160 310L150 318M145 235L162 225M65 25L78 30M130 0Q110 30 115 60Q125 80 150 70M155 0L190 50M225 0Q215 50 150 80M278 790Q270 730 227 700L240 740M255 720L278 637L290 750L322 697L315 805L337 770L338 833M290 805V833"/>
                    <path d="M278 10Q275 35 295 30L325 95Q340 108 345 90L368 60L400 45L403 15L370 0M368 65L400 108Q410 105 405 95L385 55M490 38L600 8Q660 0 680 50L705 170L730 198Q732 210 720 212L540 260C480 270 450 230 440 160C435 90 445 50 490 38ZM517 135C525 90 575 80 580 110C590 150 565 190 545 188C530 170 570 130 600 168Q615 135 637 130"/>
                    <path d="M850 0L830 45L1043 130C1060 70 1040 30 1020 0M1043 40C1100 0 1180 0 1210 70Q1235 120 1222 185L1050 118M880 65C880 110 900 130 960 185C1000 220 980 250 930 270L1040 317C1060 290 1050 250 1080 235Q1150 225 1160 165M905 85Q910 110 945 118L948 100M955 100Q1030 140 1028 212Q1080 180 1090 140M1105 140L1115 180L1103 188Q1135 190 1140 155"/>
                    <path d="M280 285C250 270 215 290 210 335C210 390 235 450 288 418C300 440 350 455 375 380C395 320 390 250 325 265M280 285Q240 285 235 228Q280 225 283 285L290 220L330 240Q310 260 283 305M530 362L558 350M562 1115L585 1142M655 390C670 360 760 370 820 420Q880 470 883 495Q930 500 925 540Q900 610 840 605C790 670 700 665 660 610C620 560 630 460 655 390ZM673 520C685 570 730 580 755 558M868 528L895 530Q890 570 852 577ZM678 395C700 380 780 410 830 455Q880 500 840 498C780 500 650 430 678 395Z"/>
                    <ellipse class="solid" cx="671" cy="484" rx="9" ry="12"/><ellipse class="solid" cx="774" cy="540" rx="9" ry="12"/>
                    <use href="#l" x="590" y="335"/><use href="#l" x="540" y="1082"/>
                    <path d="M925 430Q920 410 940 415L968 450L1035 358Q1055 350 1058 372L975 482Q968 490 960 480ZM1005 480L1085 365Q1105 355 1107 378L1025 492Q1005 500 1005 480ZM262 495L305 533L275 545L250 577ZM628 797L705 748L680 855Q675 825 660 812Z"/>
                    <use href="#moon" x="1127" y="517"/>
                    <path d="M410 590C420 555 460 555 465 570C520 530 570 570 565 665C590 720 570 770 520 757L395 705C350 680 355 590 410 590ZM515 630C480 600 450 620 452 660C460 710 515 705 517 660M497 628L515 637L517 615M970 690Q1040 660 1115 675C1180 710 1215 790 1225 850Q1225 880 1200 890C1150 905 1060 910 1030 870C1000 840 965 750 968 710ZM1035 675L985 795M1060 680L1005 820M1185 745L1130 900M1200 775L1155 900M1050 730L1150 795M1075 720L1065 758M1098 735L1088 775M1122 752L1110 790M1140 770L1130 808"/>
                    <path d="M430 960Q420 950 430 920C450 830 510 805 550 808C600 820 620 870 612 930Q605 942 595 943L440 962Z"/>
                    <ellipse cx="495" cy="891" rx="22" ry="28"/><ellipse cx="549" cy="889" rx="22" ry="28"/>
                    <use href="#dot" x="490" y="882"/><use href="#dot" x="543" y="880"/>
                    <path d="M845 785Q840 740 868 740Q890 745 887 785M870 783C900 780 930 800 950 830C980 880 965 940 935 980C900 1020 860 1060 815 1040C770 1020 740 960 750 900C770 850 820 790 870 783ZM805 900C800 930 805 970 840 982C880 980 915 940 915 890C910 840 860 840 845 862ZM870 790L868 848M805 835L832 870M753 903L805 908M805 965L768 1005M852 985L848 1045M887 965L912 1000M915 925L965 930M910 865L943 832M768 865Q730 850 722 880Q722 910 750 912M960 915Q1000 910 1000 940Q990 970 955 962M755 980Q690 1010 700 1050C715 1090 750 1080 788 1020M833 1045Q835 1090 855 1085Q880 1080 878 1040"/>
                    <use href="#bolt" x="132" y="940"/><use href="#cloud" x="342" y="1002"/><use href="#cloud" x="1062" y="1032"/><use href="#spark" x="1092" y="1202"/>
                    <ellipse cx="130" cy="1178" rx="45" ry="56"/><ellipse cx="238" cy="1142" rx="43" ry="55"/>
                    <path d="M172 1145L193 1138M280 1120Q300 1115 300 1125L285 1138M275 1175L310 1185Q315 1200 300 1198L270 1185M85 1185Q65 1180 68 1200L88 1202M105 1235L97 1270L110 1275L122 1235M360 1278V1235Q360 1215 380 1210L485 1195Q500 1195 505 1215L515 1278M512 1257L650 1235Q665 1235 668 1250L675 1278M395 1278V1270H425M450 1278L448 1265L475 1262L480 1278M188 1278Q230 1225 260 1278M733 1278C730 1180 780 1120 840 1123C920 1130 960 1200 955 1278M795 1160L805 1132H870L878 1165L837 1187ZM790 1278L832 1243L875 1278M755 1190V1250L740 1278M940 1200H915V1260L925 1278M870 1122L960 1095Q930 1150 945 1160L1050 1130Q960 1180 968 1230Q980 1270 1035 1245L1015 1278"/>
                    <use href="#s" x="256" y="141"/><use href="#s" x="385" y="197"/><use href="#s" x="756" y="87"/><use href="#s" x="1112" y="470"/><use href="#s" x="1007" y="605"/><use href="#s" x="405" y="505"/><use href="#s" x="392" y="776"/><use href="#s" x="778" y="741"/><use href="#s" x="644" y="975"/><use href="#s" x="100" y="898"/><use href="#s" x="263" y="923"/><use href="#s" x="58" y="1004"/><use href="#s" x="432" y="1117"/><use href="#s" x="680" y="1143"/><use href="#s" x="1160" y="970"/><use href="#s" x="1162" y="1118"/><use href="#s" x="312" y="1260"/>
                    <use href="#m" x="822" y="160"/><use href="#m" x="735" y="295"/><use href="#m" x="857" y="352"/><use href="#m" x="450" y="380"/><use href="#m" x="528" y="475"/><use href="#m" x="628" y="682"/><use href="#m" x="872" y="663"/><use href="#m" x="1150" y="1285"/>
                </g>
            </g>
            <use href="#tile" x="-1122"/>
            <use href="#tile" x="1122"/>
        </svg>

        <div class="messages">
            <div class="day">Today</div>
            <a class="notice" href="#">This business uses a secure service from Meta to manage this chat. Tap to learn more.</a>

            <div class="bubble out">
                <span class="text">Pricing link?</span>
                <span class="meta">6:39&thinsp;PM
                    <svg width="46" height="30" viewBox="0 0 46 30" aria-hidden="true"><path fill="none" stroke="#53bdeb" stroke-width="4" stroke-linecap="round" stroke-linejoin="round" d="M2 19L9 27L30 3M20 25L23 27L44 3"/></svg>
                </span>
                <svg class="tail" width="30" height="46" viewBox="0 0 30 46" aria-hidden="true"><path fill="#144d37" d="M12 0Q12 36 30 45Q14 48 0 36V0Z"/></svg>
            </div>

            <div class="bubble in">
                <div class="row">
                    <strong class="text">Pricing Link:</strong>
                    <span class="meta">6:39&thinsp;PM</span>
                </div>
                <a class="action" href="#">
                    <svg width="48" height="48" viewBox="0 0 48 48" aria-hidden="true"><g fill="none" stroke="#1fc15f" stroke-width="4" stroke-linecap="round" stroke-linejoin="round"><rect x="2" y="2" width="44" height="44" rx="5"/><path d="M15 32L32 16M19 15H33V29"/></g></svg>
                    Pricing Page
                </a>
                <svg class="tail" width="30" height="46" viewBox="0 0 30 46" aria-hidden="true"><path fill="#242626" d="M18 0Q18 36 0 46Q16 48 30 36V0Z"/></svg>
            </div>
        </div>
    </main>

    <div class="composer">
        <button type="button" aria-label="Attach">
            <svg width="60" height="60" viewBox="0 0 60 60" aria-hidden="true"><path stroke="#fff" stroke-width="5" stroke-linecap="round" d="M30 3V57M3 30H57"/></svg>
        </button>
        <div class="field">
            <span class="caret"></span>
            <input type="text" aria-label="Message">
            <button type="button" aria-label="Stickers">
                <svg width="56" height="56" viewBox="0 0 56 56" aria-hidden="true"><g fill="none" stroke="#fff" stroke-width="4" stroke-linejoin="round"><path d="M20 3H35Q53 3 53 21V30Q53 38 47 43L40 50Q36 53 30 53H24Q3 53 3 34V21Q3 3 20 3Z"/><path d="M53 29Q51 31 46 31Q31 32 32 45Q32 51 30 53"/></g></svg>
            </button>
        </div>
        <button type="button" aria-label="Camera">
            <svg width="70" height="56" viewBox="0 0 70 56" aria-hidden="true"><g fill="none" stroke="#fff" stroke-width="4"><path stroke-linejoin="round" d="M7 10H18Q21 10 23 7L25 4Q27 2 30 2H40Q43 2 45 4L47 7Q49 10 52 10H63Q68 10 68 15V48Q68 53 63 53H7Q2 53 2 48V15Q2 10 7 10Z"/><circle cx="35" cy="31" r="14"/></g><circle cx="55" cy="20" r="4" fill="#fff"/></svg>
        </button>
        <button type="button" aria-label="Voice message">
            <svg width="48" height="70" viewBox="0 0 48 70" aria-hidden="true"><g fill="none" stroke="#fff" stroke-width="4" stroke-linecap="round"><rect x="13" y="2" width="22" height="46" rx="11"/><path d="M2 36Q4 58 24 58T46 36M24 58V68"/></g></svg>
        </button>
    </div>

    <div class="keyboard">
        <div class="suggestions">
            <button type="button">I</button>
            <button type="button">The</button>
            <button type="button">I’m</button>
        </div>
        <div class="keys">
            <button type="button">Q</button><button type="button">W</button><button type="button">E</button><button type="button">R</button><button type="button">T</button><button type="button">Y</button><button type="button">U</button><button type="button">I</button><button type="button">O</button><button type="button">P</button>
        </div>
        <div class="keys middle">
            <button type="button">A</button><button type="button">S</button><button type="button">D</button><button type="button">F</button><button type="button">G</button><button type="button">H</button><button type="button">J</button><button type="button">K</button><button type="button">L</button>
        </div>
        <div class="keys">
            <button class="shift" type="button" aria-label="Shift">
                <svg width="64" height="56" viewBox="0 0 64 56" aria-hidden="true"><path d="M29 2Q32-1 35 2L62 29Q65 35 59 36H47V50Q47 56 41 56H23Q17 56 17 50V36H5Q-1 35 2 29Z"/></svg>
            </button>
            <button type="button">Z</button><button type="button">X</button><button type="button">C</button><button type="button">V</button><button type="button">B</button><button type="button">N</button><button type="button">M</button>
            <button class="delete" type="button" aria-label="Delete">
                <svg width="66" height="56" viewBox="0 0 66 56" aria-hidden="true"><path fill="none" stroke="#fff" stroke-width="5" stroke-linecap="round" stroke-linejoin="round" d="M28 3H56Q63 3 63 10V46Q63 53 56 53H28Q25 53 22 50L4 31Q2 28 4 25L22 6Q25 3 28 3ZM28 18L49 38M49 18L28 38"/></svg>
            </button>
        </div>
        <div class="keys bottom">
            <button class="mod" type="button">123</button>
            <button class="mod" type="button" aria-label="Emoji">
                <svg width="60" height="60" viewBox="0 0 60 60" aria-hidden="true"><circle cx="30" cy="30" r="30" fill="#fff"/><g fill="#494949"><circle cx="21" cy="23" r="4"/><circle cx="39" cy="23" r="4"/><path d="M10 33Q9 30 13 31Q30 37 47 31Q51 30 50 33Q48 51 30 51T10 33Z"/></g><path fill="#fff" d="M14 36Q30 41 46 36Q46 41 30 42Q14 41 14 36Z"/></svg>
            </button>
            <button class="space" type="button">space</button>
            <button class="mod return" type="button">return</button>
        </div>
        <div class="dock">
            <button type="button" aria-label="Next keyboard">
                <svg width="82" height="82" viewBox="0 0 82 82" aria-hidden="true"><g fill="none" stroke="#fff" stroke-width="5"><circle cx="41" cy="41" r="38"/><ellipse cx="41" cy="41" rx="18" ry="38"/><path d="M41 3V79M3 41H79M14 15Q41 32 68 15M14 67Q41 50 68 67"/></g></svg>
            </button>
            <button type="button" aria-label="Dictate">
                <svg width="58" height="86" viewBox="0 0 58 86" aria-hidden="true"><g fill="none" stroke="#fff" stroke-width="5" stroke-linecap="round"><rect x="17" y="3" width="24" height="50" rx="12"/><path d="M3 34V40Q3 67 29 67T55 40V34M29 67V83M10 83H48"/></g></svg>
            </button>
        </div>
    </div>
</body>
</html>
```

FILE: styles.css
```css
* {
    box-sizing: border-box;
}

body {
    margin: 0;
    min-height: 100vh;
    display: flex;
    flex-direction: column;
    background-color: #101010;
    color: #fff;
    font-family: Inter, "Liberation Sans", sans-serif;
}

button {
    display: flex;
    align-items: center;
    justify-content: center;
    padding: 0;
    border: none;
    background: none;
    color: inherit;
    font: inherit;
    cursor: pointer;
}

a {
    text-decoration: none;
}

svg {
    display: block;
    flex-shrink: 0;
}

/* header */
.status {
    display: flex;
    align-items: center;
    justify-content: space-between;
    height: 100px;
    margin-top: 37px;
    padding: 0 112px 0 155px;
}

.statusLeft {
    display: flex;
    align-items: center;
    gap: 13px;
}

.statusRight {
    display: flex;
    align-items: center;
    gap: 22px;
}

.clock {
    font-size: 53px;
    font-weight: 600;
    line-height: 64px;
}

.bell {
    width: 42px;
    height: 46px;
}

.signal {
    width: 65px;
    height: 45px;
}

.wifi {
    width: 58px;
    height: 42px;
}

.battery {
    width: 94px;
    height: 44px;
}

.nav {
    display: flex;
    align-items: center;
    height: 156px;
    padding: 23px 67px 0 40px;
}

.back {
    gap: 30px;
    width: 142px;
    justify-content: flex-start;
    font-size: 49px;
}

.avatar {
    display: flex;
    align-items: center;
    justify-content: center;
    width: 108px;
    height: 108px;
    border: 1px solid #3b3b3b;
    border-radius: 50%;
    background-color: #301620;
}

.contact {
    flex: 1;
    margin-left: 31px;
}

.contact h1 {
    margin: 0;
    font-size: 46px;
    font-weight: 600;
    line-height: 52px;
}

.contact p {
    margin: 0;
    color: #8e8e8e;
    font-size: 35px;
    line-height: 42px;
}

/* conversation */
.chat {
    position: relative;
    flex: 1;
    overflow: hidden;
    background-color: #0a0a0a;
}

.wallpaper {
    position: absolute;
    inset: 0;
    width: 100%;
    height: 100%;
}

.wallpaper path,
.wallpaper ellipse,
.wallpaper rect {
    fill: none;
    stroke: #242424;
    stroke-width: 2.5px;
    stroke-linecap: round;
    stroke-linejoin: round;
    vector-effect: non-scaling-stroke;
}

.wallpaper .solid {
    fill: #242424;
    stroke: none;
}

.wallpaper text {
    fill: none;
    stroke: #242424;
    stroke-width: 2px;
    font-size: 50px;
    font-weight: 700;
}

.messages {
    position: relative;
    display: flex;
    flex-direction: column;
    padding: 104px 50px 60px;
}

.day {
    align-self: center;
    padding: 0 64px;
    border-radius: 24px;
    background-color: #171818;
    font-size: 38px;
    font-weight: 600;
    line-height: 56px;
}

.notice {
    align-self: center;
    width: 82%;
    margin-top: 43px;
    padding: 16px 30px 22px;
    border-radius: 24px;
    background-color: #171818;
    color: #6eed87;
    font-size: 38px;
    line-height: 54px;
    text-align: center;
}

.bubble {
    position: relative;
    border-radius: 36px;
}

.bubble .text {
    font-size: 48px;
    line-height: 60px;
}

.bubble strong {
    font-weight: 600;
}

.meta {
    display: flex;
    align-items: center;
    gap: 12px;
    font-size: 35px;
    line-height: 42px;
}

.out {
    display: flex;
    justify-content: space-between;
    gap: 38px;
    align-self: flex-end;
    margin-top: 40px;
    padding: 17px 29px 24px;
    background-color: #144d37;
}

.out .meta {
    align-self: flex-end;
    margin-bottom: -10px;
    color: #a1b8af;
}

.in {
    width: 82%;
    margin-top: 40px;
    background-color: #242626;
}

.row {
    display: flex;
    justify-content: space-between;
    height: 104px;
    padding: 17px 31px 17px 29px;
    border-bottom: 1px solid #3a3c3c;
}

.in .meta {
    align-self: flex-end;
    color: #a7a8a8;
}

.action {
    display: flex;
    align-items: center;
    justify-content: center;
    gap: 28px;
    height: 129px;
    padding-left: 6px;
    color: #1fc15f;
    font-size: 43px;
}

.tail {
    position: absolute;
    bottom: 0;
}

.out .tail {
    right: -18px;
}

.in .tail {
    left: -18px;
}

/* message box */
.composer {
    display: flex;
    align-items: center;
    height: 142px;
    padding: 0 51px 0 40px;
}

.field {
    display: flex;
    flex: 1;
    align-items: center;
    min-width: 0;
    height: 90px;
    margin: 4px 56px 0 41px;
    padding: 0 34px 0 26px;
    border: 1px solid #3c3c3c;
    border-radius: 45px;
    background-color: #282828;
}

.caret {
    width: 6px;
    height: 72px;
    border-radius: 3px;
    background-color: #1fc15f;
}

.field input {
    flex: 1;
    min-width: 0;
    height: 80px;
    border: none;
    outline: none;
    background: none;
    color: #fff;
    font: inherit;
    font-size: 48px;
}

.composer > button:last-child {
    margin-left: 58px;
}

/* keyboard */
.keyboard {
    display: flex;
    flex-direction: column;
    gap: 33px;
    padding: 0 12px 79px;
    background-color: #2e2e2e;
}

.suggestions {
    display: flex;
    margin: 39px -12px 12px;
}

.suggestions button {
    flex: 1;
    height: 75px;
    color: #e9e9e9;
    font-size: 49px;
}

.suggestions button + button {
    border-left: 3px solid #444;
}

.keys {
    display: flex;
    gap: 18px;
}

.middle {
    padding: 0 64px;
}

.keys button {
    flex: 1;
    height: 135px;
    border-radius: 15px;
    background-color: #6d6d6d;
    box-shadow: 0 3px 0 #1b1b1b;
    font-size: 65px;
}

.keys .shift,
.keys .delete {
    flex: 0 0 149px;
}

.keys .shift {
    margin-right: 26px;
    background-color: #d6d6d6;
}

.keys .delete {
    margin-left: 26px;
    background-color: #494949;
}

.keys.bottom button {
    font-size: 46px;
}

.keys .mod {
    flex: 143 1 0;
    background-color: #494949;
}

.keys .space {
    flex: 624 1 0;
    padding-bottom: 8px;
}

.keys .return {
    flex: 303 1 0;
}

.dock {
    display: flex;
    align-items: center;
    justify-content: space-between;
    margin-top: 42px;
    padding: 0 87px 0 74px;
}
```
